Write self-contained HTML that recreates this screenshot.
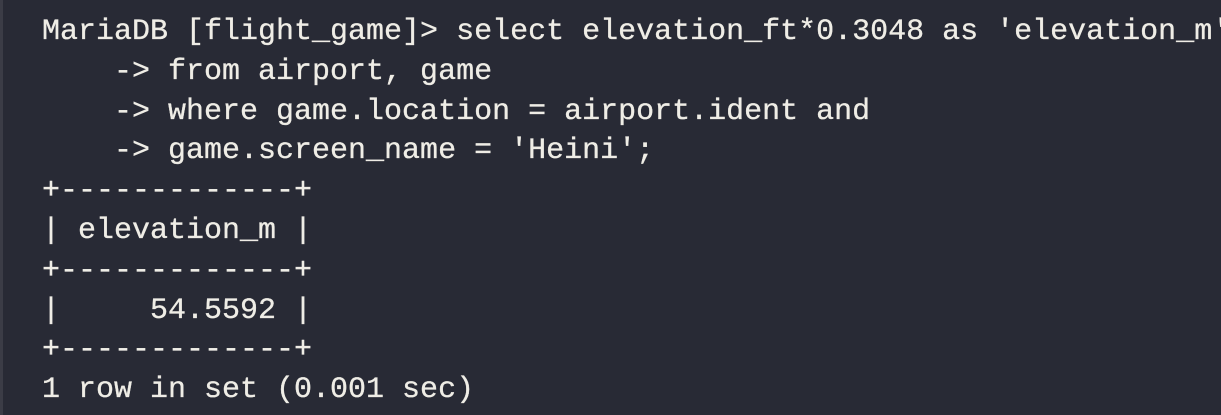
<!DOCTYPE html>
<html><head><style>
html,body{margin:0;padding:0;}
body{width:1221px;height:415px;background:#282a35;overflow:hidden;position:relative;}
.edge{position:absolute;left:0;top:0;width:3px;height:415px;background:#3b3c46;}
pre{position:absolute;left:42px;top:13px;margin:0;font-family:"Liberation Mono",monospace;font-size:30px;line-height:39.8px;color:#efede6;white-space:pre;-webkit-text-stroke:0.3px #efede6;}
</style></head><body><div class="edge"></div><pre>MariaDB [flight_game]&gt; select elevation_ft*0.3048 as 'elevation_m'
    -&gt; from airport, game
    -&gt; where game.location = airport.ident and
    -&gt; game.screen_name = 'Heini';
+-------------+
| elevation_m |
+-------------+
|     54.5592 |
+-------------+
1 row in set (0.001 sec)</pre></body></html>
